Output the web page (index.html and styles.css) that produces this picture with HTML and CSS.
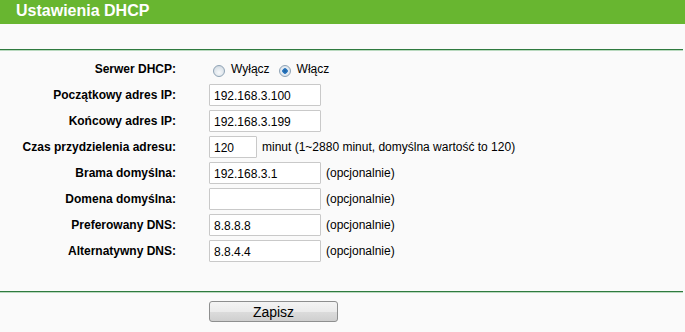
FILE: index.html
```html
<!DOCTYPE html>
<html lang="pl">
<head>
    <meta charset="UTF-8">
    <title>Ustawienia DHCP</title>
    <link rel="stylesheet" href="styles.css">
</head>
<body>
    <div class="naglowek">Ustawienia DHCP</div>
    <div class="linia linia-gora"></div>
    <form class="formularz" onsubmit="return false;">
        <label class="etykieta">Serwer DHCP:</label>
        <div class="pole">
            <label class="opcja"><input type="radio" name="dhcp" value="0"> Wyłącz</label>
            <label class="opcja"><input type="radio" name="dhcp" value="1" checked> Włącz</label>
        </div>

        <label class="etykieta" for="start">Początkowy adres IP:</label>
        <div class="pole"><input type="text" id="start" class="tekst" value="192.168.3.100"></div>

        <label class="etykieta" for="koniec">Końcowy adres IP:</label>
        <div class="pole"><input type="text" id="koniec" class="tekst" value="192.168.3.199"></div>

        <label class="etykieta" for="czas">Czas przydzielenia adresu:</label>
        <div class="pole"><input type="text" id="czas" class="tekst krotki" value="120"> <span class="opis">minut (1~2880 minut, domyślna wartość to 120)</span></div>

        <label class="etykieta" for="brama">Brama domyślna:</label>
        <div class="pole"><input type="text" id="brama" class="tekst" value="192.168.3.1"> <span class="opis">(opcjonalnie)</span></div>

        <label class="etykieta" for="domena">Domena domyślna:</label>
        <div class="pole"><input type="text" id="domena" class="tekst" value=""> <span class="opis">(opcjonalnie)</span></div>

        <label class="etykieta" for="dns1">Preferowany DNS:</label>
        <div class="pole"><input type="text" id="dns1" class="tekst" value="8.8.8.8"> <span class="opis">(opcjonalnie)</span></div>

        <label class="etykieta" for="dns2">Alternatywny DNS:</label>
        <div class="pole"><input type="text" id="dns2" class="tekst" value="8.8.4.4"> <span class="opis">(opcjonalnie)</span></div>
    </form>
    <div class="linia linia-dol"></div>
    <div class="przyciski">
        <button type="button" class="zapisz">Zapisz</button>
    </div>
</body>
</html>
```

FILE: styles.css
```css
body {
    margin: 0;
    background: #fafafa;
    font-family: "Liberation Sans", Arial, sans-serif;
    font-size: 12px;
    color: #000;
}
.naglowek {
    height: 24px;
    line-height: 22px;
    padding-left: 16px;
    background: #68b630;
    color: #fff;
    font-size: 16px;
    font-weight: bold;
}
.linia {
    height: 1px;
    background: #2f7a3f;
    border-bottom: 1px solid #b9d9bf;
    margin-right: 2px;
}
.linia-gora {
    margin-top: 25px;
}
.formularz {
    display: grid;
    grid-template-columns: 176px auto;
    grid-auto-rows: 26px;
    column-gap: 33px;
    margin: 5px 0 0;
}
.formularz > .etykieta:first-child,
.formularz > .etykieta:first-child + .pole {
    height: 25px;
}
.etykieta {
    display: flex;
    align-items: center;
    justify-content: flex-end;
    font-weight: bold;
}
.pole {
    display: flex;
    align-items: center;
    gap: 5px;
}
.opcja {
    display: flex;
    align-items: center;
    margin-right: 0;
}
.opcja input {
    appearance: none;
    -webkit-appearance: none;
    box-sizing: border-box;
    width: 12px;
    height: 12px;
    margin: 4px 6px 0 4px;
    border: 1px solid #8fa3b5;
    border-radius: 50%;
    background: radial-gradient(circle at 50% 65%, #f7f9fb 0%, #dde4ea 60%, #c4ced8 100%);
}
.opcja input:checked {
    background: radial-gradient(circle, #1c5e9e 0, #2f7cc4 2.5px, #e8eef4 3px, #d4dde6 100%);
}
.tekst {
    box-sizing: border-box;
    width: 112px;
    height: 22px;
    margin: 0;
    padding: 2px 4px 0;
    border: 1px solid #c9c9c9;
    border-radius: 1px;
    background: #fff;
    font-family: "Liberation Sans", Arial, sans-serif;
    font-size: 12px;
    color: #000;
}
.krotki {
    width: 48px;
}
.linia-dol {
    margin-top: 27px;
}
.przyciski {
    padding: 8px 0 0 209px;
}
.zapisz {
    width: 129px;
    height: 21px;
    border: 1px solid #8e8f8f;
    border-radius: 3px;
    background: linear-gradient(#f4f4f4 0%, #ebebeb 50%, #dcdcdc 51%, #cfcfcf 100%);
    font-family: "Liberation Sans", Arial, sans-serif;
    font-size: 14px;
    color: #000;
    padding: 0;
}
```
